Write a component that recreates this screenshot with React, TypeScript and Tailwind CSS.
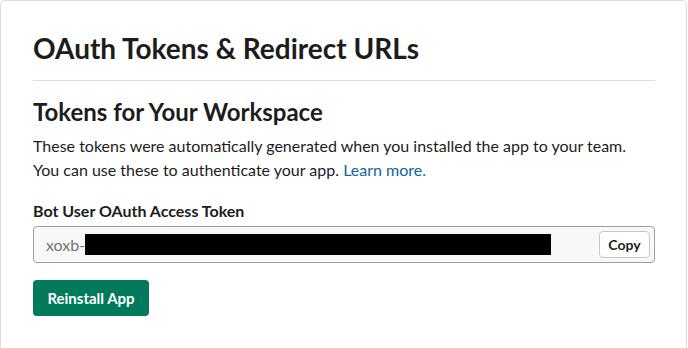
export default function App() {
  return (
    <div className="w-[688px] h-[348px] bg-white overflow-hidden" style={{ fontFamily: "Lato, 'Noto Sans', sans-serif" }}>
      <div className="w-[687px] h-[400px] border border-[#dddddd] rounded-[5px] px-[32px] pt-[27px]">
        <h1 className="text-[28px] leading-[40px] font-bold text-[#1d1c1d]">OAuth Tokens &amp; Redirect URLs</h1>
        <div className="mt-[12px] h-px bg-[#dddddd] w-[622px]" />
        <h2 className="mt-[15px] text-[24px] leading-[32px] font-bold text-[#1d1c1d]">Tokens for Your Workspace</h2>
        <p className="mt-[6px] text-[16px] leading-[24px] text-[#1d1c1d]">
          These tokens were automatically generated when you installed the app to your team.<br />
          You can use these to authenticate your app. <span className="text-[#1264a3]">Learn more.</span>
        </p>
        <div className="mt-[17px] text-[16px] leading-[24px] font-bold text-[#1d1c1d]">Bot User OAuth Access Token</div>
        <div className="mt-[3px] w-[622px] h-[37px] border border-[#a0a0a0] rounded-[4px] bg-[#f8f8f8] flex items-center pl-[12px] pr-[4px]">
          <span className="text-[16px] text-[#737373]">xoxb-</span>
          <span className="w-[466px] h-[21px] bg-black" />
          <div className="flex-1" />
          <button className="h-[27px] w-[51px] bg-white border border-[#c8c8c8] rounded-[4px] text-[14px] font-bold text-[#1d1c1d]">Copy</button>
        </div>
        <button className="mt-[17px] h-[36px] w-[116px] bg-[#007a5a] rounded-[4px] text-white text-[15px] font-bold">Reinstall App</button>
      </div>
    </div>
  );
}
